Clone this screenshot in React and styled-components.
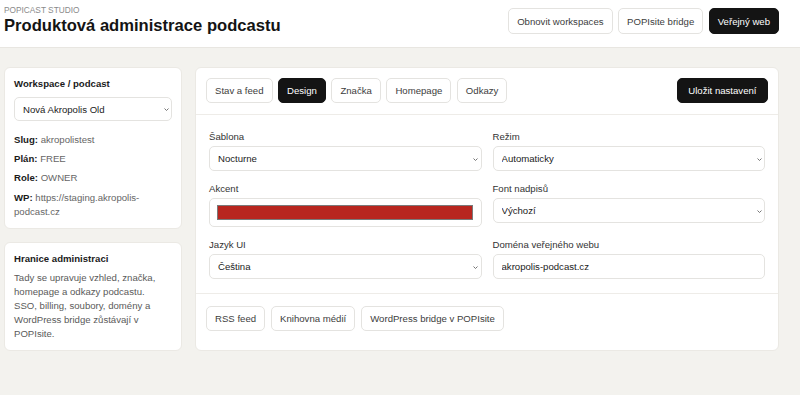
import React from "react";
import styled, { createGlobalStyle } from "styled-components";

const Global = createGlobalStyle`
  html, body { margin: 0; padding: 0; }
  body {
    background: #f3f2ee;
    font-family: "Liberation Sans", Arial, sans-serif;
    font-size: 9.6px;
    color: #222;
  }
  #root { min-height: 395px; }
  * { box-sizing: border-box; }
`;

const Page = styled.div`
  min-height: 395px;
  background: #f3f2ee;
`;

const Header = styled.header`
  height: 48px;
  background: #fff;
  border-bottom: 1px solid #e8e6e1;
  display: flex;
  justify-content: space-between;
  align-items: flex-start;
  padding: 5px 21px 0 4px;
`;

const TitleBlock = styled.div`
  display: flex;
  flex-direction: column;
`;

const Eyebrow = styled.div`
  font-size: 8.3px;
  line-height: 10px;
  color: #8a8a8a;
  text-transform: uppercase;
`;

const Title = styled.h1`
  margin: 1px 0 0;
  font-size: 16.6px;
  line-height: 19px;
  font-weight: 700;
  color: #141414;
`;

const Actions = styled.div`
  display: flex;
  gap: 5.5px;
  margin-top: 3px;
`;

const Button = styled.button`
  font-family: inherit;
  font-size: 9.6px;
  height: ${(p) => p.$h || 25}px;
  padding: 0 ${(p) => p.$px || 8}px;
  border-radius: 5px;
  border: 1px solid ${(p) => (p.$dark ? "#141414" : "#e4e3e0")};
  background: ${(p) => (p.$dark ? "#141414" : "#fff")};
  color: ${(p) => (p.$dark ? "#fff" : "#3d3d3d")};
  white-space: nowrap;
  cursor: pointer;
`;

const Body = styled.main`
  display: grid;
  grid-template-columns: 178px 584px;
  gap: 13px;
  padding: 19px 21px 0 4px;
  align-items: stretch;
`;

const Sidebar = styled.aside`
  display: flex;
  flex-direction: column;
  gap: 13px;
`;

const Card = styled.section`
  background: #fff;
  border: 1px solid #ebe9e4;
  border-radius: 6px;
  padding: 9px 9px 9px;
  display: flex;
  flex-direction: column;
`;

const CardTitle = styled.h3`
  margin: 0;
  font-size: 9.6px;
  line-height: 14px;
  font-weight: 700;
  color: #1a1a1a;
`;

const MetaList = styled.div`
  display: flex;
  flex-direction: column;
  gap: 4.8px;
  margin-top: 12px;
`;

const Meta = styled.div`
  line-height: 14.4px;
  color: #666;
  b { color: #1a1a1a; font-weight: 700; }
`;

const Note = styled.p`
  margin: 5px 0 0;
  padding-right: 3px;
  line-height: 14px;
  color: #5a5a5a;
`;

const SelectWrap = styled.div`
  position: relative;
  margin-top: ${(p) => p.$mt || 0}px;
`;

const Select = styled.select`
  appearance: none;
  -webkit-appearance: none;
  width: 100%;
  height: ${(p) => p.$h || 25}px;
  border: 1px solid #e4e3e0;
  border-radius: 5px;
  background: #fff;
  padding: 0 14px 0 8px;
  font-family: inherit;
  font-size: 9.6px;
  color: #222;
  outline: none;
`;

const Chevron = styled.svg`
  position: absolute;
  right: 3.5px;
  top: 50%;
  width: 5px;
  height: 3px;
  margin-top: -1px;
  pointer-events: none;
`;

const TextInput = styled.input`
  width: 100%;
  height: 25px;
  border: 1px solid #e4e3e0;
  border-radius: 5px;
  background: #fff;
  padding: 0 8px;
  font-family: inherit;
  font-size: 9.6px;
  color: #222;
  outline: none;
`;

const ColorInput = styled.input`
  -webkit-appearance: none;
  appearance: none;
  display: block;
  width: 100%;
  height: 29px;
  border: 1px solid #e4e3e0;
  border-radius: 5px;
  background: #fff;
  padding: 6px 8px 6px 7px;
  margin: 0;
  cursor: pointer;
  &::-webkit-color-swatch-wrapper { padding: 0; }
  &::-webkit-color-swatch { border: 1px solid #7a7a7a; border-radius: 0; }
`;

const MainCard = styled.section`
  background: #fff;
  border: 1px solid #ebe9e4;
  border-radius: 6px;
  display: flex;
  flex-direction: column;
`;

const TabBar = styled.div`
  display: flex;
  justify-content: space-between;
  align-items: center;
  padding: 10px 10px 11px;
  border-bottom: 1px solid #eeece8;
`;

const Tabs = styled.div`
  display: flex;
  gap: 5.5px;
`;

const FormGrid = styled.div`
  display: grid;
  grid-template-columns: 1fr 1fr;
  column-gap: 11px;
  row-gap: 11px;
  padding: 15px 13px 14px;
  border-bottom: 1px solid #eeece8;
`;

const Field = styled.label`
  display: flex;
  flex-direction: column;
  gap: 2px;
`;

const FieldLabel = styled.span`
  line-height: 14px;
  color: #333;
`;

const Footer = styled.div`
  display: flex;
  gap: 6px;
  padding: 12px 10px;
`;

const ChevronIcon = () => (
  <Chevron viewBox="0 0 5 3">
    <polyline points="0.5,0.5 2.5,2.5 4.5,0.5" fill="none" stroke="#666" strokeWidth="0.9" />
  </Chevron>
);

const Dropdown = ({ value, mt, h }) => (
  <SelectWrap $mt={mt}>
    <Select defaultValue={value} $h={h}>
      <option>{value}</option>
    </Select>
    <ChevronIcon />
  </SelectWrap>
);

const tabs = ["Stav a feed", "Design", "Značka", "Homepage", "Odkazy"];

export default function App() {
  return (
    <Page>
      <Global />
      <Header>
        <TitleBlock>
          <Eyebrow>Popicast Studio</Eyebrow>
          <Title>Produktová administrace podcastu</Title>
        </TitleBlock>
        <Actions>
          <Button $h={26}>Obnovit workspaces</Button>
          <Button $h={26}>POPIsite bridge</Button>
          <Button $h={26} $dark>Veřejný web</Button>
        </Actions>
      </Header>
      <Body>
        <Sidebar>
          <Card>
            <CardTitle>Workspace / podcast</CardTitle>
            <Dropdown value="Nová Akropolis Old" mt={6} h={24} />
            <MetaList>
              <Meta><b>Slug:</b> akropolistest</Meta>
              <Meta><b>Plán:</b> FREE</Meta>
              <Meta><b>Role:</b> OWNER</Meta>
              <Meta><b>WP:</b> https://staging.akropolis-podcast.cz</Meta>
            </MetaList>
          </Card>
          <Card>
            <CardTitle>Hranice administraci</CardTitle>
            <Note>
              Tady se upravuje vzhled, značka, homepage a odkazy podcastu. SSO,
              billing, soubory, domény a WordPress bridge zůstávají v POPIsite.
            </Note>
          </Card>
        </Sidebar>
        <MainCard>
          <TabBar>
            <Tabs>
              {tabs.map((t) => (
                <Button key={t} $dark={t === "Design"}>{t}</Button>
              ))}
            </Tabs>
            <Button $dark $px={10.5}>Uložit nastavení</Button>
          </TabBar>
          <FormGrid>
            <Field>
              <FieldLabel>Šablona</FieldLabel>
              <Dropdown value="Nocturne" />
            </Field>
            <Field>
              <FieldLabel>Režim</FieldLabel>
              <Dropdown value="Automaticky" />
            </Field>
            <Field>
              <FieldLabel>Akcent</FieldLabel>
              <ColorInput type="color" defaultValue="#b8261f" />
            </Field>
            <Field>
              <FieldLabel>Font nadpisů</FieldLabel>
              <Dropdown value="Výchozí" />
            </Field>
            <Field>
              <FieldLabel>Jazyk UI</FieldLabel>
              <Dropdown value="Čeština" />
            </Field>
            <Field>
              <FieldLabel>Doména veřejného webu</FieldLabel>
              <TextInput defaultValue="akropolis-podcast.cz" />
            </Field>
          </FormGrid>
          <Footer>
            <Button>RSS feed</Button>
            <Button>Knihovna médií</Button>
            <Button>WordPress bridge v POPIsite</Button>
          </Footer>
        </MainCard>
      </Body>
    </Page>
  );
}
